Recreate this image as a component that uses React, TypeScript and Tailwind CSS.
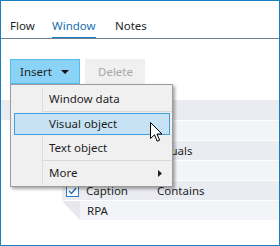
import React from 'react';

const font = { fontFamily: '"Noto Sans", "Open Sans", sans-serif' };

const MenuItem = ({ label, more = false }: { label: string; more?: boolean }) => (
  <div className="flex h-[24px] items-center">
    <div className="h-full w-[32px] shrink-0 border-r border-[#dcdcdc]" />
    <span className="pl-[6px]">{label}</span>
    {more && (
      <svg className="ml-auto mr-[10px]" width="4" height="7" viewBox="0 0 4 7">
        <path d="M0 0 L4 3.5 L0 7 Z" fill="#222" />
      </svg>
    )}
  </div>
);

const Separator = () => (
  <div className="flex h-[1px]">
    <div className="w-[32px] shrink-0 border-r border-[#dcdcdc]" />
    <div className="flex-1 bg-[#d9d9d9]" />
  </div>
);

const App = () => {
  return (
    <div
      className="relative h-[246px] w-[280px] overflow-hidden border border-[#1a7fbf] bg-white text-[11.5px] text-[#1e1e1e]"
      style={font}
    >
      {/* tabs */}
      <div className="flex h-[38px] border-b border-[#71819b] pl-[9px]">
        <div className="flex w-[42px] flex-col justify-end">
          <span className="border-b border-transparent pb-[3px] leading-[16px] self-start">Flow</span>
        </div>
        <div className="flex w-[63px] flex-col justify-end">
          <span className="border-b border-[#1c7ec2] pb-[3px] leading-[16px] self-start text-[#1c6fae]">Window</span>
        </div>
        <div className="flex flex-col justify-end">
          <span className="border-b border-transparent pb-[3px] leading-[16px] self-start">Notes</span>
        </div>
      </div>

      {/* toolbar */}
      <div className="mt-[20px] flex gap-[5px] pl-[9px]">
        <div className="flex h-[25px] w-[70px] items-center border border-[#57bdeb] bg-[#8ad3f7] pl-[9px]">
          <span>Insert</span>
          <svg className="ml-[9px]" width="8" height="4" viewBox="0 0 8 4">
            <path d="M0 0 H8 L4 4 Z" fill="#111" />
          </svg>
        </div>
        <div className="flex h-[25px] w-[60px] items-center bg-[#f0f0f1] pl-[13px] text-[#a8a8a8]">Delete</div>
      </div>

      {/* table */}
      <div className="mt-[16px] flex flex-col">
        <div className="h-[20px] bg-[#eaecf1]" />
        <div className="ml-[61px] h-[20px] border-t border-white bg-[#f3f4f7]" />
        <div className="ml-[61px] flex h-[20px] items-center border-t border-white bg-[#eaecf1]">
          <span className="pl-[95px]">Equals</span>
        </div>
        <div className="ml-[61px] h-[20px] border-t border-white bg-[#f3f4f7]" />
        <div className="ml-[61px] flex h-[20px] items-center border-t border-white bg-[#eaecf1]">
          <div className="ml-[4px] flex h-[13px] w-[13px] items-center justify-center border border-[#2f7bc4] bg-white">
            <svg width="9" height="8" viewBox="0 0 9 8">
              <path d="M1 4 L3.5 6.5 L8 1" stroke="#1f6fbf" strokeWidth="1.4" fill="none" />
            </svg>
          </div>
          <span className="ml-[7px]">Caption</span>
          <span className="ml-[29px]">Contains</span>
        </div>
        <div className="ml-[61px] flex h-[20px] border-t border-white">
          <svg width="18" height="19" viewBox="0 0 18 19" className="shrink-0">
            <path d="M0 0 H18 V19 Z" fill="#e6e8ed" />
          </svg>
          <div className="flex flex-1 items-center bg-[#f3f4f7] pl-[7px]">RPA</div>
        </div>
      </div>

      {/* dropdown menu */}
      <div className="absolute left-[9px] top-[83px] w-[163px] border border-[#9c9c9c] bg-[#f0f0f0] pt-[2px] pb-[1px] shadow-[2px_2px_3px_rgba(0,0,0,0.35)]">
        <MenuItem label="Window data" />
        <Separator />
        <div className="flex h-[24px] items-center py-[1px] pl-[3px] pr-[2px]">
          <div className="flex h-full flex-1 items-center border border-[#3d9fdf] bg-[#c6e2f3] pl-[34px]">
            Visual object
          </div>
        </div>
        <MenuItem label="Text object" />
        <Separator />
        <MenuItem label="More" more />
      </div>

      {/* cursor */}
      <svg className="absolute left-[149px] top-[121px]" width="13" height="21" viewBox="0 0 13 21">
        <path
          d="M0.5 0.5 V16.5 L4.5 12.8 L7.2 19.2 L9.6 18.2 L7 12 H12 Z"
          fill="#fff"
          stroke="#000"
          strokeWidth="1"
          strokeLinejoin="miter"
        />
      </svg>
    </div>
  );
};

export default App;
